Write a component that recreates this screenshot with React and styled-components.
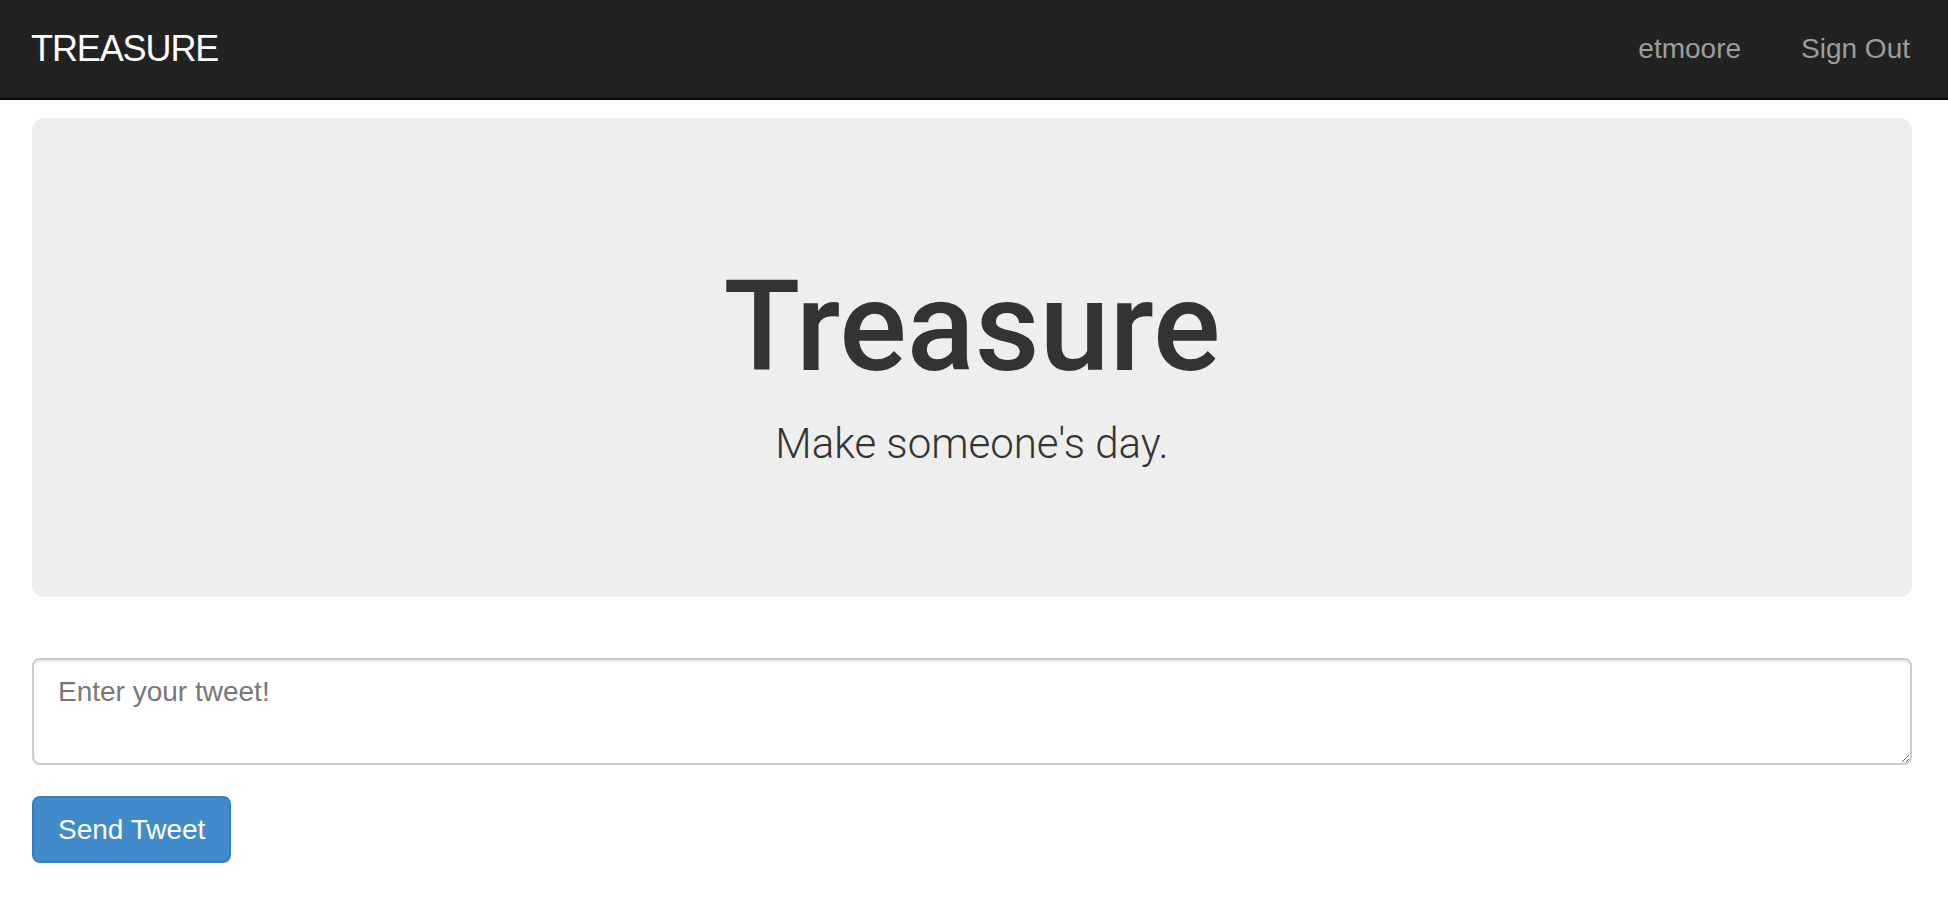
import React from "react";
import styled, { createGlobalStyle } from "styled-components";

const GlobalStyle = createGlobalStyle`
  * {
    box-sizing: border-box;
  }
  body {
    margin: 0;
    background: #fff;
    color: #333;
    font-family: "Liberation Sans", Arial, sans-serif;
  }
`;

const Navbar = styled.nav`
  display: flex;
  align-items: center;
  justify-content: space-between;
  height: 100px;
  padding: 0 38px 0 31px;
  background: #222;
  border-bottom: 2px solid #080808;
`;

const Brand = styled.a`
  color: #fff;
  font-size: 36px;
  line-height: 40px;
  letter-spacing: -1.1px;
  text-decoration: none;
`;

const NavLinks = styled.div`
  display: flex;
  gap: 60px;
`;

const NavLink = styled.a`
  color: #9d9d9d;
  font-size: 28px;
  line-height: 40px;
  text-decoration: none;
`;

const Main = styled.main`
  padding: 18px 36px 40px 32px;
`;

const Jumbotron = styled.section`
  height: 479px;
  padding: 140px 60px 0;
  background: #eee;
  border-radius: 12px;
  text-align: center;
`;

const Title = styled.h1`
  margin: 0 0 17px;
  font-family: Roboto, "Liberation Sans", sans-serif;
  font-size: 126px;
  font-weight: 500;
  line-height: 139px;
  color: #333;
`;

const Lead = styled.p`
  margin: 0;
  font-family: Roboto, "Liberation Sans", sans-serif;
  font-size: 42px;
  font-weight: 300;
  line-height: 60px;
  color: #333;
`;

const TweetForm = styled.form`
  display: flex;
  flex-direction: column;
  align-items: flex-start;
  gap: 31px;
  margin-top: 61px;
`;

const TweetInput = styled.textarea`
  display: block;
  width: 100%;
  height: 107px;
  padding: 12px 24px;
  border: 2px solid #ccc;
  border-radius: 8px;
  box-shadow: inset 0 2px 2px rgba(0, 0, 0, 0.075);
  font-family: "Liberation Sans", Arial, sans-serif;
  font-size: 28px;
  line-height: 40px;
  color: #555;
  outline: none;

  &::placeholder {
    color: #777;
  }
`;

const Button = styled.button`
  height: 67px;
  padding: 0 24px;
  border: 2px solid #357ebd;
  border-radius: 8px;
  background: #428bca;
  color: #fff;
  font-family: "Liberation Sans", Arial, sans-serif;
  font-size: 28px;
  line-height: 40px;
  cursor: pointer;
`;

export default function App() {
  return (
    <>
      <GlobalStyle />
      <Navbar>
        <Brand href="#">TREASURE</Brand>
        <NavLinks>
          <NavLink href="#">etmoore</NavLink>
          <NavLink href="#">Sign Out</NavLink>
        </NavLinks>
      </Navbar>
      <Main>
        <Jumbotron>
          <Title>Treasure</Title>
          <Lead>Make someone's day.</Lead>
        </Jumbotron>
        <TweetForm onSubmit={(e) => e.preventDefault()}>
          <TweetInput placeholder="Enter your tweet!" />
          <Button type="submit">Send Tweet</Button>
        </TweetForm>
      </Main>
    </>
  );
}
